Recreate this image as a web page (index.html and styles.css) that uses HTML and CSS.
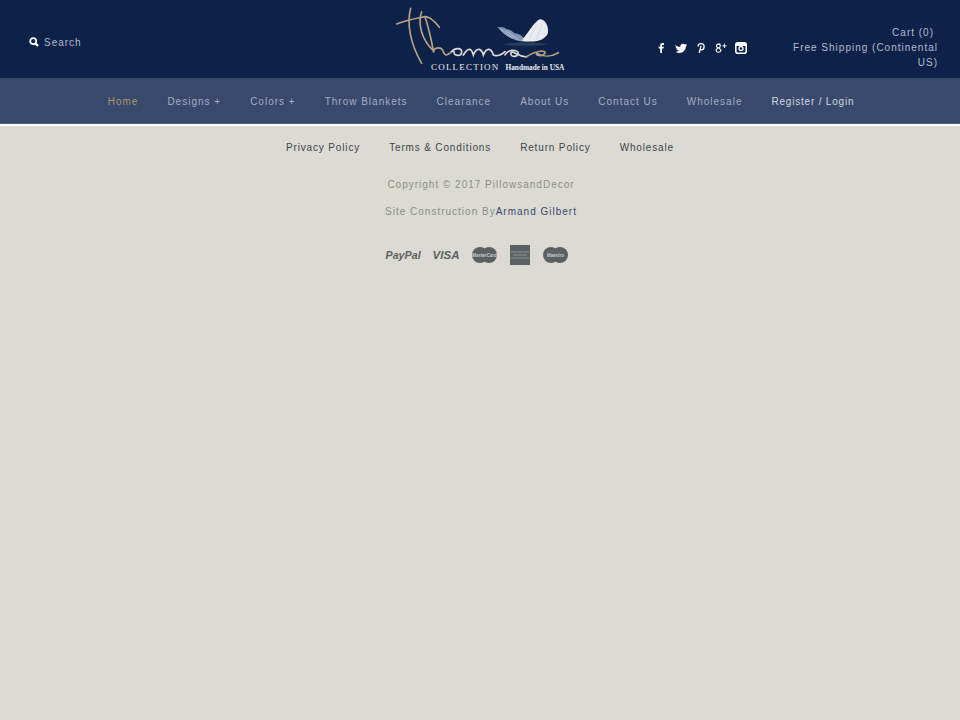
FILE: index.html
```html
<!DOCTYPE html>
<html lang="en">
<head>
<meta charset="utf-8">
<title>Thomas Collection</title>
<link rel="stylesheet" href="styles.css">
</head>
<body>
<header class="top">
  <div class="search">
    <svg class="search-icon" viewBox="0 0 10 10" width="10" height="10"><circle cx="4.2" cy="4.2" r="3" fill="none" stroke="#fff" stroke-width="1.8"/><path d="M6.4 6.4 9 9" stroke="#fff" stroke-width="2.2"/></svg>
    <span>Search</span>
  </div>
  <a class="logo">
    <svg class="logo-art" viewBox="0 0 600 240" width="200" height="80">
      <g fill="none" stroke="#b5a184" stroke-width="5" stroke-linecap="round">
        <path d="M50 72C80 60 110 55 135 50C150 50 165 65 178 82"/>
        <path d="M92 25C80 70 90 130 125 190"/>
        <path d="M125 35C112 70 125 120 160 152C155 125 145 80 135 50"/>
        <path d="M160 155C165 140 185 140 190 155C195 170 205 165 215 155"/>
      </g>
      <g fill="none" stroke="#dcdad4" stroke-width="5" stroke-linecap="round">
        <path d="M215 155C225 143 245 143 245 155C245 170 220 170 222 155"/>
        <path d="M250 165C265 140 275 145 280 165C290 140 305 145 310 165C320 140 335 145 340 165C350 170 365 165 375 155"/>
        <path d="M375 165C385 145 415 150 415 160C410 175 385 170 395 155C410 160 420 172 440 170"/>
      </g>
      <path d="M440 170C470 150 500 150 495 160C485 172 465 165 470 160C490 172 515 170 535 158" fill="none" stroke="#b5a184" stroke-width="5" stroke-linecap="round"/>
      <path d="M352 80C362 84 372 78 380 88C390 88 396 92 404 100C416 100 426 108 436 118L445 124C410 128 375 112 352 80Z" fill="#8496b6"/>
      <path d="M425 122C442 102 458 72 478 58C495 56 506 78 504 98C498 118 470 130 425 122Z" fill="#e9ebee"/>
      <path d="M362 88 398 114M378 92 414 120M470 74 448 116M488 70 468 120" stroke="#c9d2e0" stroke-width="2"/>
      <path d="M365 133C400 126 470 126 505 133C470 139 400 139 365 133Z" fill="#2d3d62"/>
    </svg>
    <div class="logo-text"><span class="logo-name">COLLECTION</span><span class="logo-tag">Handmade in USA</span></div>
  </a>
  <div class="social">
    <svg viewBox="0 0 12 12" width="12" height="12"><path d="M7 11V6.500H8.600L8.800 4.700H7V3.700C7 3.200 7.200 2.900 7.800 2.900H8.900V1.200C8.500 1.100 8 1.100 7.500 1.100C6.100 1.100 5.200 1.900 5.200 3.400V4.700H3.700V6.500H5.200V11Z" fill="#fff"/></svg>
    <svg viewBox="0 0 12 12" width="12" height="12"><path d="M0 2.500C1.500 4 3 4.800 5.200 5C5.100 3 6.600 1.600 8.200 1.800C9 1.900 9.500 2.200 10 2.600L11.800 2L10.900 3.500L12 3.200C11.600 3.800 11.200 4.200 10.800 4.500C10.800 8 8.200 11 4.500 11C3 11 1.700 10.600 .600 9.800C2 9.900 3.200 9.500 4 8.800C2.800 8.700 2 8 1.600 7.100C2 7.200 2.500 7.200 2.800 7.100C1.500 6.700 .7 5.700 .6 4.400C1 4.600 1.400 4.700 1.800 4.700C.7 4 .2 3.500 0 2.500Z" fill="#fff"/></svg>
    <svg viewBox="0 0 12 12" width="12" height="12"><path d="M3 4.600C3 2.800 4.400 1.600 6.100 1.600C7.900 1.600 9.100 2.900 9.100 4.500C9.100 6.400 8 7.800 6.500 7.800C5.900 7.800 5.400 7.500 5.200 7.100M6 3.800 4.200 10.800" fill="none" stroke="#fff" stroke-width="1.300"/></svg>
    <svg viewBox="0 0 14 14" width="12" height="12"><circle cx="4" cy="4.700" r="2.200" fill="none" stroke="#fff" stroke-width="1.300"/><path d="M6.200 2.500H4.500M3.500 7C2 7.800 1 8.800 1.300 10.200C1.800 12.600 6.800 12.400 7 10C7.100 8.600 4.700 8 4.700 7" fill="none" stroke="#fff" stroke-width="1.300"/><path d="M11 2V7M8.500 4.500H13.500" stroke="#fff" stroke-width="1.100"/></svg>
    <svg viewBox="0 0 12 12" width="12" height="12"><rect x=".8" y=".8" width="10.400" height="10.400" rx="2" fill="none" stroke="#fff" stroke-width="1.600"/><rect x="1" y="1" width="10" height="3" fill="#fff"/><circle cx="6" cy="6.500" r="2" fill="none" stroke="#fff" stroke-width="1.300"/></svg>
  </div>
  <div class="cart">
    <div class="cart-count">Cart (0)</div>
    <div>Free Shipping (Continental US)</div>
  </div>
</header>
<nav class="nav">
  <a class="active">Home</a>
  <a>Designs +</a>
  <a>Colors +</a>
  <a>Throw Blankets</a>
  <a>Clearance</a>
  <a>About Us</a>
  <a>Contact Us</a>
  <a>Wholesale</a>
  <a class="account">Register / Login</a>
</nav>
<footer class="foot">
  <div class="foot-links">
    <a>Privacy Policy</a>
    <a>Terms &amp; Conditions</a>
    <a>Return Policy</a>
    <a>Wholesale</a>
  </div>
  <p class="copy">Copyright © 2017 PillowsandDecor</p>
  <p class="credit">Site Construction By<a>Armand Gilbert</a></p>
  <div class="pay">
    <span class="paypal">PayPal</span>
    <span class="visa">VISA</span>
    <svg viewBox="0 0 27 18" width="27" height="18"><circle cx="9" cy="9" r="8" fill="#5b6062"/><circle cx="18" cy="9" r="8" fill="#5b6062"/><text class="card-label" x="13.500" y="10.500" text-anchor="middle">MasterCard</text></svg>
    <svg viewBox="0 0 20 20" width="20" height="20"><rect width="20" height="20" fill="#5b6062"/><path d="M1 7H19M3 10H17M1 13H19" stroke="#8b8f8f" stroke-width="1.200"/></svg>
    <svg viewBox="0 0 27 18" width="27" height="18"><circle cx="9" cy="9" r="8" fill="#5b6062"/><circle cx="18" cy="9" r="8" fill="#5b6062"/><text class="card-label" x="13.500" y="11" text-anchor="middle">Maestro</text></svg>
  </div>
</footer>
</body>
</html>
```
FILE: styles.css
```css
* { box-sizing: border-box; }
html, body { margin: 0; padding: 0; }
body {
  min-height: 720px;
  background: #dbdbd3;
  font-family: "Liberation Sans", sans-serif;
  font-size: 10px;
  letter-spacing: 1px;
  color: #3f4347;
}
.top {
  height: 78px;
  background: #0e2149;
  display: grid;
  grid-template-columns: 1fr 180px 1fr;
  align-items: center;
  position: relative;
  color: #b6bdcc;
}
.search {
  display: flex;
  align-items: center;
  gap: 5px;
  padding-left: 29px;
  padding-top: 6px;
}
.search-icon { display: block; }
.logo { grid-column: 2; height: 78px; position: relative; display: block; }
.logo-art { display: block; position: absolute; left: -10px; top: 0; }
.logo-text {
  position: absolute;
  left: 41px;
  top: 62px;
  display: flex;
  align-items: baseline;
  gap: 6px;
  white-space: nowrap;
  font-family: "Liberation Serif", serif;
  color: #eceef2;
  letter-spacing: 0;
}
.logo-name { font-size: 9px; letter-spacing: 1.200px; }
.logo-tag { font-size: 7.300px; font-weight: bold; }
.social {
  position: absolute;
  left: 655px;
  top: 42px;
  display: flex;
  align-items: center;
  gap: 8px;
}
.social svg { display: block; }
.cart {
  position: absolute;
  right: 22px;
  top: 25px;
  width: 146px;
  text-align: right;
  line-height: 15px;
}
.cart-count { padding-right: 4px; }
.nav {
  height: 46px;
  padding: 1px 0 0 2px;
  background: #39496b;
  display: flex;
  justify-content: center;
  align-items: center;
  gap: 29px;
  color: #a3adc2;
  border-bottom: 1px solid #555f78;
}
.nav .active { color: #a7986f; }
.nav .account { color: #d3d8e2; letter-spacing: .8px; }
.foot {
  border-top: 2px solid #fff;
  text-align: center;
}
.foot-links {
  display: flex;
  justify-content: center;
  gap: 29px;
  padding-top: 16px;
  line-height: 12px;
  letter-spacing: .85px;
}
.copy, .credit { margin: 0; color: #8b8d8a; line-height: 12px; padding-left: 2px; }
.copy { margin-top: 25px; }
.credit { margin-top: 15px; }
.credit a { color: #39496b; }
.pay {
  margin-top: 27px;
  padding-right: 5px;
  display: flex;
  justify-content: center;
  align-items: center;
  gap: 12px;
  color: #5b6062;
  letter-spacing: 0;
}
.pay svg { display: block; }
.paypal { font: italic bold 10.700px "Liberation Sans", sans-serif; }
.visa { font: italic bold 11.500px "Liberation Sans", sans-serif; }
.card-label { font: italic bold 4.500px "Liberation Sans", sans-serif; fill: #c9cac6; }
```
